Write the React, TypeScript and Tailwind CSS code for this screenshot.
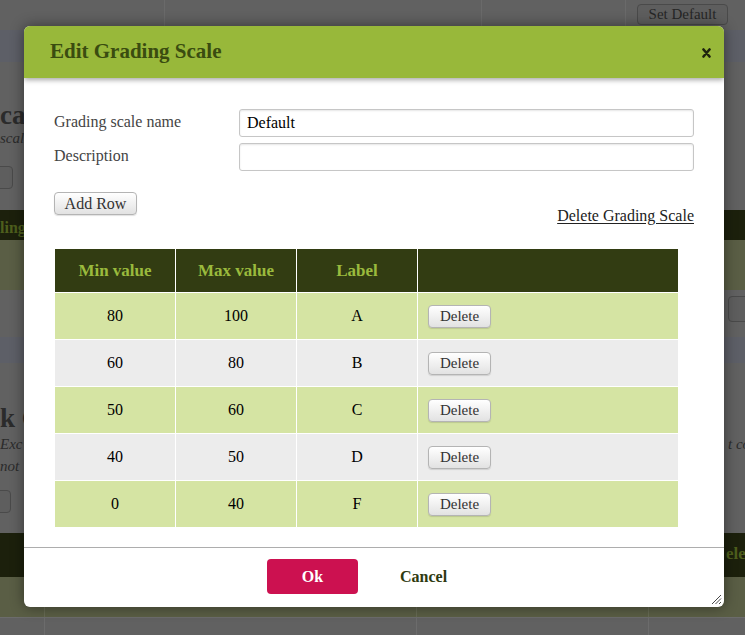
import React from "react";

// Edit Grading Scale modal over a dimmed settings page.

const SERIF = "font-['Liberation_Serif','Times_New_Roman',serif]";

const ROWS = [
  { min: "80", max: "100", label: "A" },
  { min: "60", max: "80", label: "B" },
  { min: "50", max: "60", label: "C" },
  { min: "40", max: "50", label: "D" },
  { min: "0", max: "40", label: "F" },
];

function GrayButton({ children, className = "" }: { children: React.ReactNode; className?: string }) {
  return (
    <button
      className={`flex items-center justify-center rounded-[4px] border border-[#b4b4b4] bg-gradient-to-b from-white to-[#e2e2e2] text-[#333] shadow-[0_1px_1px_rgba(0,0,0,0.12)] ${className}`}
    >
      {children}
    </button>
  );
}

function BackgroundPage() {
  return (
    <div className={`${SERIF} flex h-[635px] flex-col whitespace-nowrap bg-[#616161] text-[#2a2a2a]`}>
      {/* top table row */}
      <div className="grid h-[30px] grid-cols-[165px_317px_144px_1fr]">
        <div className="border-r border-[#6a6a6a]" />
        <div className="border-r border-[#6a6a6a]" />
        <div className="border-r border-[#6a6a6a]" />
        <div className="pl-[11px] pt-[4px]">
          <div className="flex h-[21px] w-[91px] items-center justify-center rounded-[4px] border border-[#4a4a4a] bg-[#5e5e5e] text-[15px] text-[#262626]">
            Set Default
          </div>
        </div>
      </div>
      <div className="h-[32px] bg-[#5d5f67]" />
      <div className="relative h-[148px]">
        <div className="absolute left-0 top-[40px] text-[27px] font-bold leading-none text-[#2b2b2b]">cal</div>
        <div className="absolute left-0 top-[69px] text-[15px] italic leading-none text-[#2b2b2b]">scal</div>
        <div className="absolute left-[-6px] top-[104px] h-[23px] w-[19px] rounded-[4px] border border-[#4a4a4a] bg-[#5e5e5e]" />
      </div>
      <div className="relative h-[30px] bg-[#1c200c]">
        <div className="absolute left-0 top-[10px] text-[16px] font-bold leading-none text-[#4e5f1d]">ling</div>
      </div>
      <div className="h-[50px] bg-[#5a5e45]" />
      <div className="relative h-[47px]">
        <div className="absolute left-[728px] top-[6px] h-[26px] w-[30px] rounded-[4px] border border-[#4a4a4a] bg-[#5e5e5e]" />
      </div>
      <div className="h-[26px] bg-[#5d5f67]" />
      <div className="relative h-[170px]">
        <div className="absolute left-0 top-[42px] text-[27px] font-bold leading-none text-[#2b2b2b]">k G</div>
        <div className="absolute left-0 top-[74px] text-[15px] italic leading-none text-[#2b2b2b]">Exc</div>
        <div className="absolute left-0 top-[96px] text-[15px] italic leading-none text-[#2b2b2b]">not</div>
        <div className="absolute left-[728px] top-[74px] text-[15px] italic leading-none text-[#2b2b2b]">t co</div>
        <div className="absolute left-[-8px] top-[127px] h-[23px] w-[19px] rounded-[4px] border border-[#4a4a4a] bg-[#5e5e5e]" />
      </div>
      <div className="relative h-[44px] bg-[#1c200c]">
        <div className="absolute left-[726px] top-[12px] text-[17px] font-bold leading-none text-[#4e5f1d]">ele</div>
      </div>
      <div className="grid h-[40px] grid-cols-[45px_372px_232px_1fr] bg-[#5a5e45]">
        <div className="border-r border-[#676b54]" />
        <div className="border-r border-[#676b54]" />
        <div className="border-r border-[#676b54]" />
        <div />
      </div>
      <div className="grid flex-1 grid-cols-[45px_372px_232px_1fr] border-t border-[#6c6c6c]">
        <div className="border-r border-[#6c6c6c]" />
        <div className="border-r border-[#6c6c6c]" />
        <div className="border-r border-[#6c6c6c]" />
        <div />
      </div>
    </div>
  );
}

function Modal() {
  return (
    <div
      className={`${SERIF} absolute left-[24px] top-[26px] flex h-[581px] w-[700px] flex-col overflow-hidden rounded-[6px] bg-white shadow-[0_0_14px_rgba(0,0,0,0.45)]`}
    >
      <div className="relative z-10 flex h-[52px] items-center justify-between bg-[#98b83a] pl-[26px] pr-[13px] shadow-[0_2px_5px_rgba(0,0,0,0.35)]">
        <h1 className="text-[21px] font-bold text-[#3a4c10]">Edit Grading Scale</h1>
        <svg width="9" height="10" viewBox="0 0 9 10" className="mt-[1px]">
          <path d="M1.5 1.5 L7.5 8.5 M7.5 1.5 L1.5 8.5" stroke="#1e240e" strokeWidth="2.6" strokeLinecap="round" />
        </svg>
      </div>

      <div className="flex-1 px-[30px] pt-[31px]">
        <div className="grid grid-cols-[185px_1fr] gap-y-[6px] text-[16px]">
          <label className="pt-[4px] leading-[18px] text-[#444]">Grading scale name</label>
          <input
            defaultValue="Default"
            className="h-[28px] rounded-[3px] border border-[#c6c6c6] px-[7px] text-[16px] text-black shadow-[inset_0_1px_2px_rgba(0,0,0,0.1)] outline-none"
          />
          <label className="pt-[4px] leading-[18px] text-[#444]">Description</label>
          <input className="h-[28px] rounded-[3px] border border-[#c6c6c6] px-[7px] text-[16px] text-black shadow-[inset_0_1px_2px_rgba(0,0,0,0.1)] outline-none" />
        </div>

        <div className="mt-[21px] flex items-start justify-between">
          <GrayButton className="h-[23px] w-[83px] text-[16px]">Add Row</GrayButton>
          <a className="mt-[15px] text-[16px] leading-[18px] text-[#222] underline underline-offset-[2px]">Delete Grading Scale</a>
        </div>

        <div className="ml-[1px] mt-[24px] grid w-[623px] grid-cols-[120px_120px_120px_260px] gap-px bg-white">
          {["Min value", "Max value", "Label", ""].map((h, i) => (
            <div
              key={i}
              className="flex h-[43px] items-center justify-center bg-[#323c12] text-[17px] font-bold text-[#9aba3d]"
            >
              {h}
            </div>
          ))}
          {ROWS.map((r, i) => {
            const bg = i % 2 === 0 ? "bg-[#d5e4a3]" : "bg-[#ececec]";
            return (
              <React.Fragment key={r.label}>
                <div className={`flex h-[46px] items-center justify-center text-[16px] text-black ${bg}`}>{r.min}</div>
                <div className={`flex h-[46px] items-center justify-center text-[16px] text-black ${bg}`}>{r.max}</div>
                <div className={`flex h-[46px] items-center justify-center text-[16px] text-black ${bg}`}>{r.label}</div>
                <div className={`flex h-[46px] items-center pl-[10px] ${bg}`}>
                  <GrayButton className="h-[23px] w-[63px] text-[15px]">Delete</GrayButton>
                </div>
              </React.Fragment>
            );
          })}
        </div>
      </div>

      <div className="relative flex h-[60px] items-start border-t border-[#adadad] pl-[243px] pt-[11px]">
        <button className="flex h-[35px] w-[91px] items-center justify-center rounded-[4px] bg-[#cc1150] text-[16px] font-bold text-white">
          Ok
        </button>
        <button className="ml-[42px] flex h-[35px] items-center text-[16px] font-bold text-[#2e3a10]">Cancel</button>
        <svg width="12" height="12" viewBox="0 0 12 12" className="absolute bottom-[2px] right-[2px]">
          <path d="M11 2 L2 11 M11 5.5 L5.5 11 M11 9 L9 11" stroke="#333" strokeWidth="0.9" />
        </svg>
      </div>
    </div>
  );
}

export default function App() {
  return (
    <div className="relative h-[635px] w-[745px] overflow-hidden">
      <BackgroundPage />
      <Modal />
    </div>
  );
}
